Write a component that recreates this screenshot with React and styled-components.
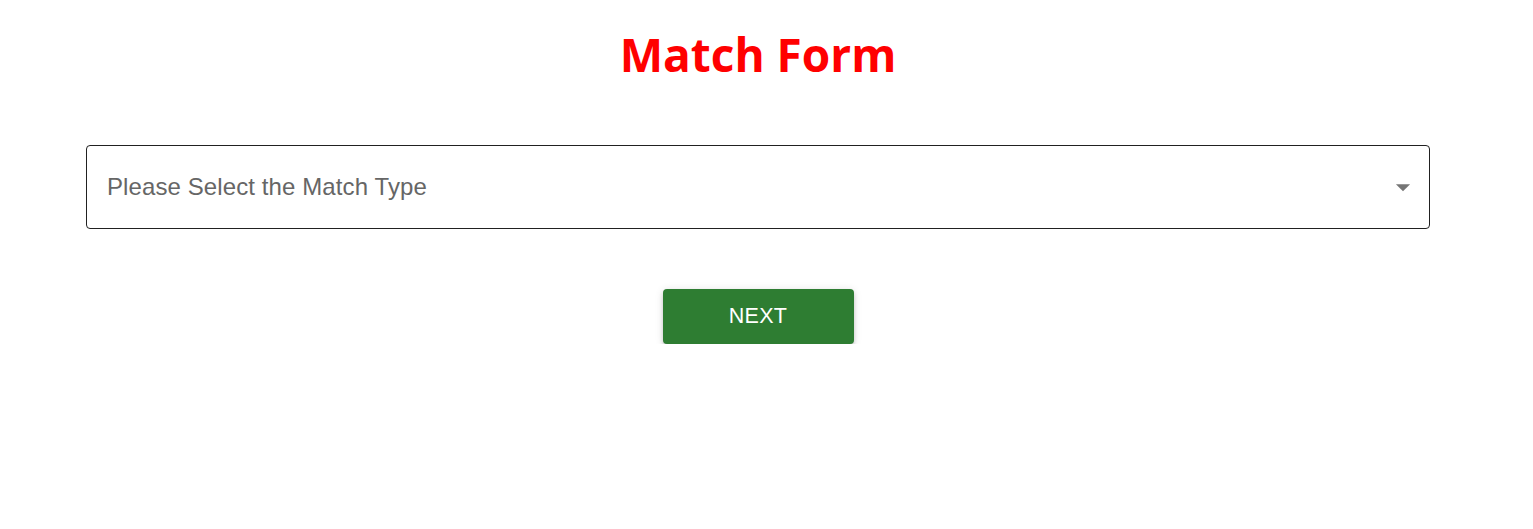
import React from "react";
import styled, { createGlobalStyle } from "styled-components";

const GlobalStyle = createGlobalStyle`
    body {
      margin: 0;
      background: #fff;
      font-family: "Liberation Sans", Arial, sans-serif;
    }
`

const Page = styled.div`
    width: 1516px;
    display: flex;
    flex-direction: column;
    align-items: center;
`

const Title = styled.h1`
    margin: 22px 0 0;
    color: #ff0000;
    font-family: "Open Sans", "Noto Sans", sans-serif;
    font-weight: 700;
    font-size: 46px;
    line-height: 64px;
`

const Form = styled.div`
    align-self: stretch;
    margin: 59px 86px 0;
    display: flex;
    flex-direction: column;
    align-items: center;
`

const SelectBox = styled.div`
    align-self: stretch;
    box-sizing: border-box;
    height: 84px;
    padding: 0 9px 0 20px;
    border: 1px solid rgba(0, 0, 0, 0.87);
    border-radius: 4px;
    display: flex;
    align-items: center;
    justify-content: space-between;
    cursor: pointer;
`

const Placeholder = styled.span`
    color: #666;
    font-size: 24px;
    letter-spacing: 0.1px;
`

const Arrow = styled.svg`
    width: 34px;
    height: 34px;
    fill: rgba(0, 0, 0, 0.54);
`

const NextButton = styled.button`
    margin-top: 60px;
    width: 191px;
    height: 55px;
    border: none;
    border-radius: 4px;
    background: #2e7d32;
    color: #fff;
    font-family: "Liberation Sans", Arial, sans-serif;
    font-size: 21.5px;
    letter-spacing: 0.3px;
    text-transform: uppercase;
    box-shadow: 0 3px 3px -2px rgba(0,0,0,0.2), 0 3px 4px 0 rgba(0,0,0,0.14), 0 1px 8px 0 rgba(0,0,0,0.12);
    cursor: pointer;
`

const App = () => {
    return (
        <>
            <GlobalStyle />
            <Page>
                <Title>Match Form</Title>
                <Form>
                    <SelectBox>
                        <Placeholder>Please Select the Match Type</Placeholder>
                        <Arrow viewBox="0 0 24 24">
                            <path d="M7 10l5 5 5-5z" />
                        </Arrow>
                    </SelectBox>
                    <NextButton>Next</NextButton>
                </Form>
            </Page>
        </>
    )
}

export default App;
